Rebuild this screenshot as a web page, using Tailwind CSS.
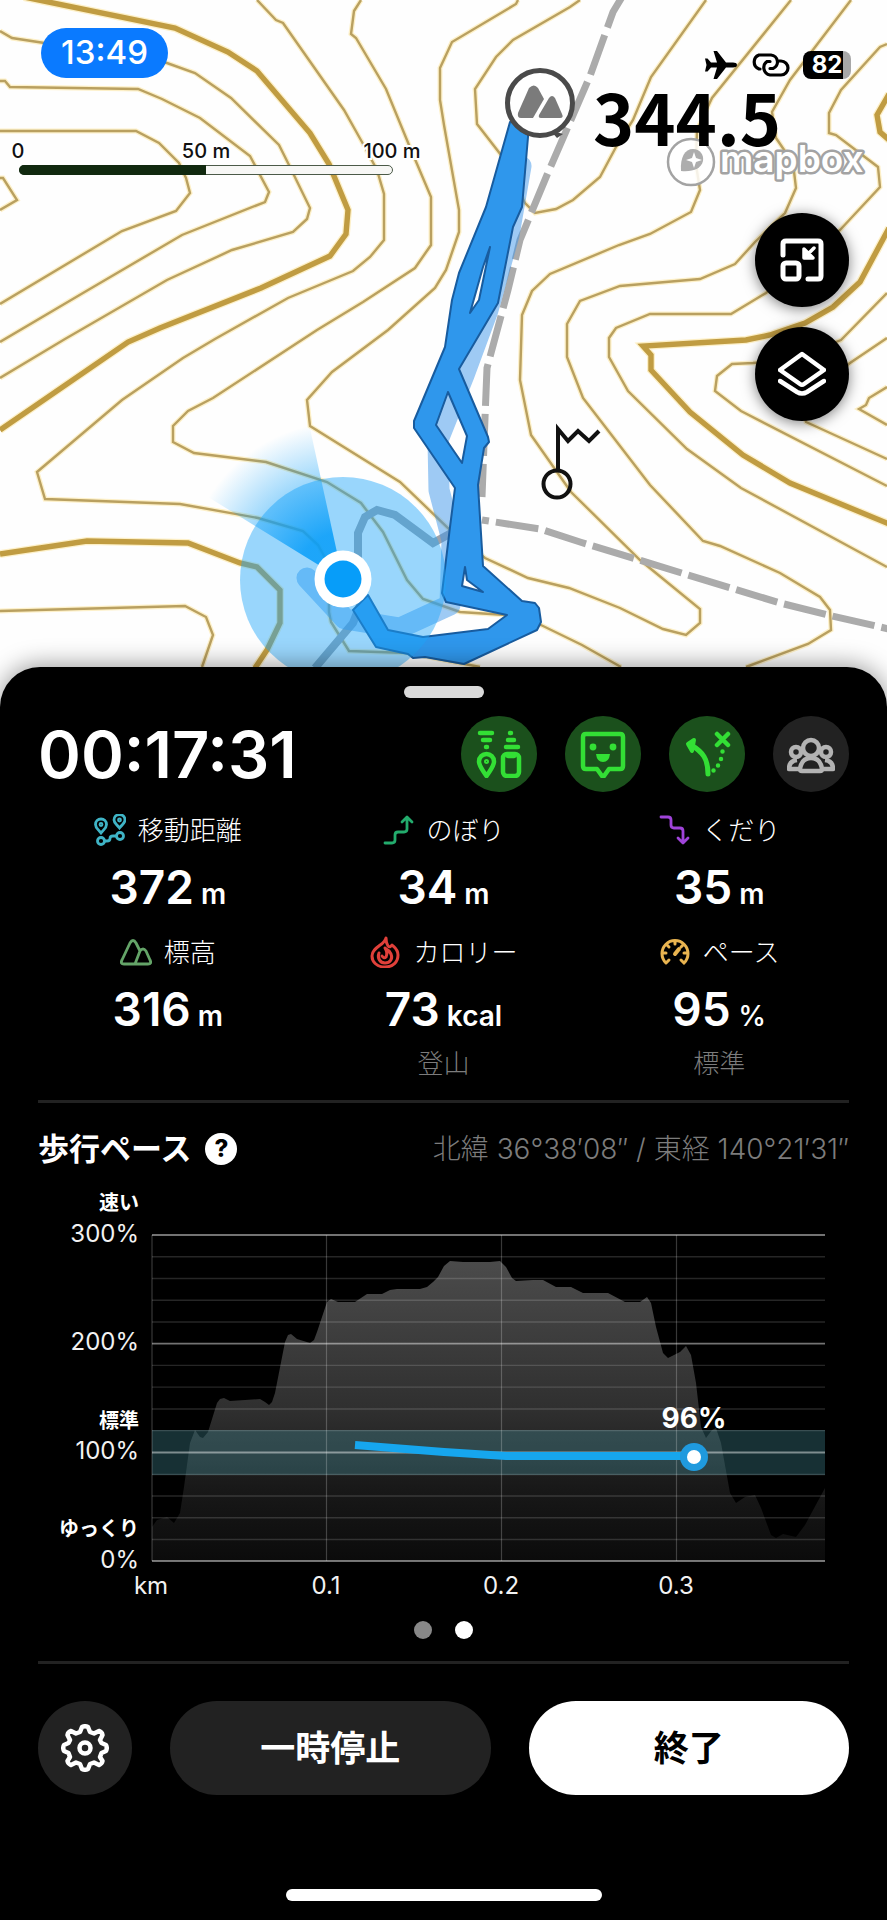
<!DOCTYPE html>
<html lang="ja">

<head>
    <meta charset="UTF-8">
    <meta name="viewport" content="width=device-width, initial-scale=1.0">
    <script src="https://cdn.jsdelivr.net/npm/@tailwindcss/browser@4"></script>
    <title>活動記録</title>
</head>

<body class="bg-black font-['Inter','Noto_Sans_CJK_JP',sans-serif]">

    <div class="flex flex-col min-h-screen">

        <!-- Map -->
        <section class="relative flex-1 min-h-[707px] -mb-10 bg-[#fefefe] overflow-hidden">
            <svg class="absolute inset-0 w-full h-full" viewBox="0 0 887 707" preserveAspectRatio="xMinYMin slice" fill="none" aria-hidden="true">
                <defs>
                    <radialGradient id="heading" gradientUnits="userSpaceOnUse" cx="343" cy="580" r="158">
                        <stop offset="0.3" stop-color="#079df9" stop-opacity="0.85" />
                        <stop offset="0.62" stop-color="#079df9" stop-opacity="0.42" />
                        <stop offset="1" stop-color="#079df9" stop-opacity="0" />
                    </radialGradient>
                    <g id="contours">
                        <path d="M0 31L12 38L90 50L167 63L195 73L231 98L279 145L289 165L310 208L307 219L293 232L232 250L167 280L65 339L0 378" />
                        <path d="M0 81H5L10 87L138 89L162 99L200 118L250 156L269 192L265 202L182 235L83 293L0 342" />
                        <path d="M0 131H136L159 143L179 163L186 178L190 193L176 211L122 231L0 304" />
                        <path d="M0 178H3L17 200L0 210" />
                        <path d="M257 0L276 20L283 23L344 110L362 142L377 170L384 194V240L370 257L353 271L288 298L215 339L183 358L122 400L37 472L45 499L180 504L258 518L303 531L318 545L329 565V612L331 622L349 651L408 653L480 667" />
                        <path d="M361 0L354 11L351 34L356 38L386 89L409 145L431 197V245L415 268L363 302L317 330L213 398L188 411L173 426V442L194 453L266 462L327 482L361 503L383 532L407 580L423 599L460 612L506 615L541 625L582 645L621 667" />
                        <path d="M518 0L516 4L452 42L440 68V100L444 125L459 210V232L446 270L435 288L388 330L332 372L307 400L310 426L400 482L448 528L485 558L528 578L569 588L620 608L663 629L686 635L700 623V609L640 560L571 492L531 435L520 380L522 315L532 291L550 274L619 245L650 234L691 212L700 190L696 165L697 130L712 98L791 0" />
                        <path d="M580 0L570 7L513 40L496 57L475 89L477 124L501 155L525 203L535 213L556 209L573 200L600 177L616 147L633 120L651 77L706 0" />
                        <path d="M851 0L790 80L772 112L776 138L793 163L796 188L785 213L755 242L735 264L700 279L620 286L580 301L567 324V357L583 398L610 433L650 485L703 541L720 546L780 573L820 597L830 610L831 630L808 644L746 667" />
                        <path d="M887 44L880 47L841 90L829 113V133L836 135L878 167L880 187L840 230L766 293L731 314H650L616 328L609 338V357L628 391L687 449L741 488L887 567" />
                        <path d="M887 293L841 340L790 360L753 363L732 364L717 376L715 391L741 411L887 486" />
                        <path d="M887 338L850 363L800 400L806 422L887 459" />
                        <path d="M887 387L869 398L866 405L859 409L887 425" />
                        <path d="M0 611L185 606L206 617L213 635L202 667" />
                    </g>
                    <g id="index-contours">
                        <path d="M24 -3L175 28L228 52L257 71L310 133L329 164L348 210L346 234L330 256L261 288L160 328L128 342L0 430" />
                        <path d="M0 554L87 541L188 543L240 563L257 567L280 590V623L267 650L255 668" />
                        <path d="M889 228L860 282L833 307L805 323L770 335L746 340L643 346L651 355V370L690 412L743 455L790 483L889 524" />
                        <path d="M889 94L877 115L880 132L889 140" />
                    </g>
                </defs>

                <!-- contour lines with a pale casing -->
                <use href="#contours" stroke="#fdf0c8" stroke-width="5" />
                <use href="#contours" stroke="#b9a060" stroke-width="2.4" />
                <use href="#index-contours" stroke="#fdf0c8" stroke-width="8" />
                <use href="#index-contours" stroke="#c09c42" stroke-width="5.4" />

                <!-- trails -->
                <path d="M622 -3L613 12L590 76L547 175L520 240L508 290L487 368L485 418L482 497" stroke="#ababab" stroke-width="7" stroke-dasharray="42 8" stroke-dashoffset="8" />
                <path d="M482 520L540 529L580 542L780 603L828 615L889 629" stroke="#ababab" stroke-width="7" stroke-dasharray="43 7" stroke-dashoffset="36" />
                <path d="M315 668L353 623L362 600L358 570V533L365 517L377 510L395 515L433 543L455 531" stroke="#9da2aa" stroke-width="8" />

                <!-- earlier track -->
                <path d="M521 166L509 235L488 310L464 375L438 440L439 490L452 540L450 605L400 628L345 619L307 578" stroke="#3d95ea" stroke-opacity="0.5" stroke-width="21" stroke-linecap="round" stroke-linejoin="round" />

                <!-- current track -->
                <path d="M510 122L486 207L459 273L452 300L445 347L414 421L414 428L455 488L450 527L442 593L446 602L507 615L488 629L423 637L388 630L368 595L353 610L376 647L408 654L413 658L425 657L464 664L537 630L541 622L539 608L535 603L522 601L483 566L478 485L484 448L489 442L488 437L459 369L498 303L513 227L522 207L528 137V120Z
                    M490 247L483 267L470 313L479 300Z
                    M448 392L436 425L462 463L467 436Z
                    M465 567L462 586L483 592L467 580Z" fill="#2f97ec" fill-rule="evenodd" stroke="#185c9f" stroke-width="2" stroke-linejoin="round" />

                <!-- weather station -->
                <g stroke="#111" stroke-width="4">
                    <circle cx="557" cy="484" r="13.5" />
                    <path d="M558 470V429L568 441L578 431L589 441L599 431" />
                </g>

                <!-- summit -->
                <path d="M550 130L563 134L557 138Z" fill="#4a4a4a" />
                <circle cx="540" cy="103" r="32.5" fill="#fff" stroke="#4a4a4a" stroke-width="5" />
                <path d="M529 88Q534 83 538 88L544 99L533 118H521Q517 118 518 113Z" fill="#7b7b7b" />
                <path d="M549 98Q552 94 555 98L562 114Q564 118 560 118H541Q538 118 539 115Z" fill="#7b7b7b" />

                <!-- current position -->
                <circle cx="343" cy="580" r="103" fill="#1ea7fb" fill-opacity="0.45" />
                <path d="M343 580L195 489L306 410Z" fill="url(#heading)" />
                <circle cx="343" cy="579" r="28.5" fill="#fff" />
                <circle cx="343" cy="579" r="18.5" fill="#079df9" />

                <!-- map provider -->
                <circle cx="691" cy="162" r="23" fill="#fff" fill-opacity="0.85" stroke="#a3a3a3" stroke-width="2.5" />
                <path d="M681 171C680 157 685 149 693 149C700 149 704 155 703 161C701 169 693 172 681 171Z" fill="#adadad" />
                <path d="M694 152L696 158L702 160L696 162L694 168L692 162L686 160L692 158Z" fill="#fff" />
                <text x="720" y="172" font-size="37" font-weight="600" fill="#fff" stroke="#a3a3a3" stroke-width="5" stroke-linejoin="round" paint-order="stroke">mapbox</text>
                <text x="593" y="146" font-size="70" font-weight="700" fill="#000" font-family="Noto Sans CJK JP, sans-serif">344.5</text>

                <!-- distance scale -->
                <g font-size="20" font-weight="500" fill="#111" stroke="#fff" stroke-width="4" paint-order="stroke" text-anchor="middle">
                    <text x="18" y="158">0</text>
                    <text x="206" y="158">50 m</text>
                    <text x="392" y="158">100 m</text>
                </g>
                <rect x="19.500" y="165.500" width="373" height="9" rx="4.500" fill="#f7f7f5" stroke="#4b5a48" />
                <path d="M206 165H24a5 5 0 0 0 0 10H206Z" fill="#11290f" />
            </svg>

            <!-- Status bar -->
            <div class="relative flex justify-between items-start pl-[41px] pr-9 pt-7">
                <span class="flex items-center justify-center w-[127px] h-[50px] rounded-full bg-[#0a7aff] text-white text-[33px] font-medium">13:49</span>
                <div class="flex items-center gap-3 pt-[23px]">
                    <svg class="w-8 h-7" viewBox="0 0 32 28" fill="#000" aria-hidden="true">
                        <path d="M32 14C32 12.200 30 11.500 28 11.500H21L12 0H8.500L12 11.500H6L2.500 7.500H0L1.500 14L0 20.500H2.500L6 16.500H12L8.500 28H12L21 16.500H28C30 16.500 32 15.800 32 14Z" />
                    </svg>
                    <svg class="w-[42px] h-7" viewBox="0 0 42 28" fill="none" stroke="#000" stroke-width="3.200" stroke-linecap="round" aria-hidden="true">
                        <path d="M11 18H10A7.500 7.500 0 0 1 10 4H22A7 7 0 0 1 24 17.500H21" />
                        <path d="M30 10H32A7 7 0 0 1 32 24H21A7.500 7.500 0 0 1 18 10.500H21" />
                    </svg>
                    <span class="flex items-center justify-center w-12 h-7 rounded-lg bg-linear-to-r from-[#000] from-84% to-[#a8a8a8] to-84% text-white text-2xl font-bold">82</span>
                </div>
            </div>

            <!-- Map controls -->
            <div class="absolute right-[38px] top-[213px] flex flex-col gap-5">
                <button aria-label="縮小表示" class="flex items-center justify-center size-[94px] rounded-full bg-black shadow-[0_2px_14px_rgba(0,0,0,0.5)]">
                    <svg class="size-11" viewBox="0 0 44 44" fill="none" stroke="#fff" stroke-width="5" stroke-linejoin="round" stroke-linecap="round">
                        <path d="M3 17V6Q3 3 6 3H38Q41 3 41 6V38Q41 41 38 41H28" />
                        <rect x="3" y="25" width="16" height="16" rx="3" />
                        <path d="M34 10L26 18M24 11V20H33Z" fill="#fff" stroke-width="3.500" />
                    </svg>
                </button>
                <button aria-label="地図レイヤー" class="flex items-center justify-center size-[94px] rounded-full bg-black shadow-[0_2px_14px_rgba(0,0,0,0.5)]">
                    <svg class="size-12" viewBox="0 0 48 48" fill="none" stroke="#fff" stroke-width="4.500" stroke-linejoin="round" stroke-linecap="round">
                        <path d="M24 4L46 20L26 34Q24 35.500 22 34L2 20Z" />
                        <path d="M2 31L19 42Q24 45 29 42L46 31" />
                    </svg>
                </button>
            </div>
        </section>

        <!-- Activity sheet -->
        <main class="relative rounded-t-[40px] bg-black text-white px-[38px] pt-[19px] pb-5 shadow-[0_-2px_24px_rgba(0,0,0,0.4)]">
            <div class="mx-auto w-20 h-3 rounded-full bg-[#d9d9d9]"></div>

            <div class="flex items-center justify-between mt-[18px] h-[76px]">
                <h1 class="text-[65px] leading-none font-semibold">00:17:31</h1>
                <div class="flex gap-7">
                    <button aria-label="位置情報" class="flex items-center justify-center size-[76px] rounded-full bg-[#1b501c]">
                        <svg class="size-12" viewBox="0 0 48 48" fill="none" stroke="#33df35" stroke-width="4.500" stroke-linecap="round" stroke-linejoin="round">
                            <path d="M5 3H17M8 10H15M11 17H12M35 3H36M33 10H39M31 17H43" />
                            <path d="M11.500 46C7 39 4 36 4 31.500A7.500 7.500 0 0 1 19 31.500C19 36 16 39 11.500 46Z" />
                            <circle cx="11.500" cy="31.500" r="1.500" stroke-width="2" />
                            <rect x="28" y="24" width="16" height="22" rx="4" />
                            <path d="M33 26H39" />
                        </svg>
                    </button>
                    <button aria-label="メッセージ" class="flex items-center justify-center size-[76px] rounded-full bg-[#1b501c]">
                        <svg class="size-12" viewBox="0 0 48 48" fill="none" stroke="#33df35" stroke-width="4.500" stroke-linejoin="round">
                            <path d="M7 4H41Q44 4 44 7V36Q44 39 41 39H30L25 46H23L18 39H7Q4 39 4 36V7Q4 4 7 4Z" />
                            <circle cx="14" cy="17" r="3.400" fill="#33df35" stroke="none" />
                            <circle cx="34" cy="17" r="3.400" fill="#33df35" stroke="none" />
                            <path d="M17 24H31Q30 32 24 32T17 24Z" fill="#33df35" stroke="none" />
                        </svg>
                    </button>
                    <button aria-label="ルート外れ警告" class="flex items-center justify-center size-[76px] rounded-full bg-[#1b501c]">
                        <svg class="size-12" viewBox="0 0 48 48" fill="none" stroke="#33df35" stroke-width="5" stroke-linecap="round" stroke-linejoin="round">
                            <path d="M25 44C25 29 20 22 8 15" />
                            <path d="M11 10L5 14L9 21Z" fill="#33df35" stroke-width="4" />
                            <path d="M34 4L45 15M45 4L34 15" stroke-width="4.500" />
                            <path d="M39.500 21.500V21.600M38 29V29.100M35 35.500V35.600M30.500 40.500V40.600" stroke-width="4.500" />
                        </svg>
                    </button>
                    <button aria-label="メンバー" class="flex items-center justify-center size-[76px] rounded-full bg-[#222]">
                        <svg class="size-12" viewBox="0 0 48 48" fill="none" stroke="#b3b3b3" stroke-width="4.500" stroke-linejoin="round">
                            <circle cx="9" cy="22" r="5" />
                            <circle cx="39" cy="22" r="5" />
                            <path d="M10 30Q2 31 2 39H13M38 30Q46 31 46 39H35" />
                            <circle cx="24" cy="18" r="8" fill="#222" />
                            <path d="M24 28C17 28 14 32 13 39Q13 41 15 41H33Q35 41 35 39C34 32 31 28 24 28Z" fill="#222" />
                        </svg>
                    </button>
                </div>
            </div>

            <!-- Stats -->
            <dl class="grid grid-cols-3 gap-y-2 -mx-2 mt-5 text-center">
                <div>
                    <dt class="flex items-center justify-center gap-3 h-9 text-[26px] font-light">
                        <svg class="size-8" viewBox="0 0 32 32" fill="none" stroke="#3fb4c6" stroke-width="2.800" aria-hidden="true">
                            <path d="M7 19C4 15 1.500 14 1.500 10.500A5.500 5.500 0 0 1 12.500 10.500C12.500 14 10 15 7 19ZM25.500 14C22.500 10 20 9 20 6A5.500 5.500 0 0 1 31 6C31 9 28.500 10 25.500 14Z" />
                            <circle cx="7" cy="10.500" r="1" />
                            <circle cx="25.500" cy="6" r="1" />
                            <circle cx="7" cy="27" r="3.500" />
                            <circle cx="26" cy="22" r="3.500" />
                            <path d="M10.500 27H13Q16 27 16 24.500T19 22H22.500" />
                        </svg>
                        移動距離
                    </dt>
                    <dd class="flex items-center justify-center h-[78px]"><span class="text-[46px] font-semibold">372<span class="text-[28px]"> m</span></span></dd>
                </div>
                <div>
                    <dt class="flex items-center justify-center gap-3 h-9 text-[26px] font-light">
                        <svg class="size-8" viewBox="0 0 32 32" fill="none" stroke="#23ac6d" stroke-width="2.800" stroke-linecap="round" stroke-linejoin="round" aria-hidden="true">
                            <path d="M3 29H10Q13 29 13 26V21Q13 18 16 18H22Q25 18 25 15V4M20 8L25 3L30 8" />
                        </svg>
                        のぼり
                    </dt>
                    <dd class="flex items-center justify-center h-[78px]"><span class="text-[46px] font-semibold">34<span class="text-[28px]"> m</span></span></dd>
                </div>
                <div>
                    <dt class="flex items-center justify-center gap-3 h-9 text-[26px] font-light">
                        <svg class="size-8" viewBox="0 0 32 32" fill="none" stroke="#a044da" stroke-width="2.800" stroke-linecap="round" stroke-linejoin="round" aria-hidden="true">
                            <path d="M3 3H10Q13 3 13 6V11Q13 14 16 14H22Q25 14 25 17V28M20 24L25 29L30 24" />
                        </svg>
                        くだり
                    </dt>
                    <dd class="flex items-center justify-center h-[78px]"><span class="text-[46px] font-semibold">35<span class="text-[28px]"> m</span></span></dd>
                </div>
                <div>
                    <dt class="flex items-center justify-center gap-3 h-9 text-[26px] font-light">
                        <svg class="size-8" viewBox="0 0 32 32" fill="none" stroke="#64a468" stroke-width="2.800" stroke-linecap="round" stroke-linejoin="round" aria-hidden="true">
                            <path d="M4 28Q0 28 2 24L10 7Q13 2 16 7L20 15Q23 11 26 15L30 24Q32 28 28 28ZM15 28L20 15" />
                        </svg>
                        標高
                    </dt>
                    <dd class="flex items-center justify-center h-[78px]"><span class="text-[46px] font-semibold">316<span class="text-[28px]"> m</span></span></dd>
                </div>
                <div>
                    <dt class="flex items-center justify-center gap-3 h-9 text-[26px] font-light">
                        <svg class="size-8" viewBox="0 0 32 32" fill="none" stroke="#e0403a" stroke-width="3" stroke-linecap="round" stroke-linejoin="round" aria-hidden="true">
                            <path d="M17 2C16 9 3 11 3 20C3 26 8 31 16 31S29 26 29 19C29 13 25 11 23 9Q21 12 19 10Q17 7 17 2Z" />
                            <path d="M10 17C8 22 11 27 16 27S24 23 22 18Q20 14 16 12Q19 17 17 21Q15 23 13 20" />
                        </svg>
                        カロリー
                    </dt>
                    <dd class="flex items-center justify-center h-[78px]"><span class="text-[46px] font-semibold">73<span class="text-[28px]"> kcal</span></span></dd>
                    <dd class="h-8 leading-8 text-[26px] font-light text-[#7c7c7c]">登山</dd>
                </div>
                <div>
                    <dt class="flex items-center justify-center gap-3 h-9 text-[26px] font-light">
                        <svg class="size-8" viewBox="0 0 32 32" fill="none" stroke="#e9b450" stroke-width="3" stroke-linecap="round" aria-hidden="true">
                            <path d="M7 27A13 13 0 1 1 25 27L22 24M7 27L10 24M4 17H7M28 17H25M16 5V8M8 9L10 11M24 9L22 11" />
                            <path d="M16 18L20 13" stroke-width="4" />
                        </svg>
                        ペース
                    </dt>
                    <dd class="flex items-center justify-center h-[78px]"><span class="text-[46px] font-semibold">95<span class="text-[28px] font-medium"> %</span></span></dd>
                    <dd class="h-8 leading-8 text-[26px] font-light text-[#7c7c7c]">標準</dd>
                </div>
            </dl>

            <hr class="mt-5 border-0 h-[3px] bg-[#222]">

            <!-- Pace chart -->
            <div class="flex items-center justify-between mt-[26px] h-10">
                <div class="flex items-center gap-[14px]">
                    <h2 class="text-[31px] leading-10 font-bold">歩行ペース</h2>
                    <button aria-label="ヘルプ" class="flex items-center justify-center size-8 rounded-full bg-white text-black text-2xl font-extrabold">?</button>
                </div>
                <p class="text-[28px] font-light text-[#7c7c7c]">北緯 36°38′08″ / 東経 140°21′31″</p>
            </div>

            <svg class="block w-full mt-[11px]" viewBox="38 1180 811 425" fill="none" role="img" aria-label="歩行ペースのグラフ">
                <defs>
                    <linearGradient id="elevation" x1="0" y1="0" x2="0" y2="1">
                        <stop offset="0" stop-color="#4b4b4b" />
                        <stop offset="0.5" stop-color="#2f2f2f" />
                        <stop offset="0.75" stop-color="#191919" />
                        <stop offset="1" stop-color="#0b0b0b" />
                    </linearGradient>
                </defs>

                <path fill="url(#elevation)" d="M152 1561V1527L157 1520L167 1517L174 1523L180 1513L184 1487L190 1443L195 1430L200 1437L203 1438L208 1432L217 1403L220 1399L224 1398L230 1401L245 1400L260 1399L265 1402L269 1405L272 1402L275 1393L285 1342L288 1335L291 1334L297 1339L310 1343L314 1340L317 1332L327 1302L331 1299L338 1302L355 1302L367 1294L382 1294L390 1290L397 1289L420 1289L427 1287L433 1282L438 1277L444 1266L450 1261L463 1262H490L500 1261L506 1267L512 1278L516 1281L533 1280H543L556 1287H571L583 1293H608L625 1302H640L647 1297L651 1303L656 1327L663 1353L668 1358L680 1352L686 1346L691 1355L696 1383L701 1427L706 1438L712 1430L716 1428L721 1443L730 1493L736 1503L745 1497L755 1495L761 1508L771 1535L776 1538L783 1534L796 1537L805 1525L825 1488V1561Z" />
                <rect x="152" y="1430" width="673" height="45" fill="#4ba0ad" fill-opacity="0.3" />

                <g stroke="#fff" stroke-opacity="0.15" stroke-width="1.400">
                    <path d="M152 1256.700H825M152 1278.500H825M152 1300.200H825M152 1322H825M152 1365.400H825M152 1387.100H825M152 1409H825M152 1430.600H825M152 1474.500H825M152 1496H825M152 1517.800H825M152 1539.500H825" />
                </g>
                <path d="M152 1235V1561M326.500 1235V1561M501.500 1235V1561M676.500 1235V1561" stroke="#fff" stroke-opacity="0.22" stroke-width="1.200" />
                <path d="M152 1235H825M152 1343.700H825M152 1452.500H825M152 1561H825" stroke="#fff" stroke-opacity="0.45" stroke-width="1.800" />

                <path d="M355 1445L444 1452L506 1456H694" stroke="#16a6ee" stroke-width="8" />
                <circle cx="694" cy="1457" r="14" fill="#1f9ade" />
                <circle cx="694" cy="1457" r="7" fill="#fff" />
                <text x="694" y="1428" font-size="28" font-weight="700" fill="#fff" text-anchor="middle">96%</text>

                <g font-size="20" font-weight="700" fill="#fff" text-anchor="end">
                    <text x="139" y="1210">速い</text>
                    <text x="139" y="1428">標準</text>
                    <text x="139" y="1536">ゆっくり</text>
                </g>
                <g font-size="24" fill="#f2f2f2" text-anchor="end">
                    <text x="139" y="1242">300%</text>
                    <text x="139" y="1350">200%</text>
                    <text x="139" y="1459">100%</text>
                    <text x="139" y="1568">0%</text>
                </g>
                <g font-size="24" fill="#f2f2f2" text-anchor="middle">
                    <text x="151" y="1594">km</text>
                    <text x="326" y="1594">0.1</text>
                    <text x="501" y="1594">0.2</text>
                    <text x="676" y="1594">0.3</text>
                </g>
            </svg>

            <div class="flex justify-center gap-[23px] mt-4">
                <button aria-label="1ページ" class="size-[18px] rounded-full bg-[#888]"></button>
                <button aria-label="2ページ" class="size-[18px] rounded-full bg-white"></button>
            </div>

            <hr class="mt-[22px] border-0 h-[3px] bg-[#222]">

            <!-- Actions -->
            <div class="flex gap-[38px] mt-[37px]">
                <button aria-label="設定" class="flex items-center justify-center shrink-0 size-[94px] rounded-full bg-[#222]">
                    <svg class="size-12" viewBox="0 0 48 48" fill="none" stroke="#fff" stroke-width="4.500" stroke-linejoin="round">
                        <path d="M21 3Q24 1.500 27 3L29 8L33 9.500L38 7Q41 8 41.500 11L39 16L40.500 19L45 21Q46.500 24 45 27L40.500 29L39 33L41.500 37Q41 40 38 41L33 38.500L29 40L27 45Q24 46.500 21 45L19 40L15 38.500L10 41Q7 40 6.500 37L9 33L7.500 29L3 27Q1.500 24 3 21L7.500 19L9 16L6.500 11Q7 8 10 7L15 9.500L19 8Z" />
                        <circle cx="24" cy="24" r="5.500" />
                    </svg>
                </button>
                <button class="flex-1 h-[94px] rounded-full bg-[#222] text-white text-[35px] font-bold">一時停止</button>
                <button class="flex-1 h-[94px] rounded-full bg-white text-black text-[35px] font-bold">終了</button>
            </div>

            <div class="mx-auto mt-[94px] w-[316px] h-3 rounded-full bg-white"></div>
        </main>
    </div>

</body>

</html>
